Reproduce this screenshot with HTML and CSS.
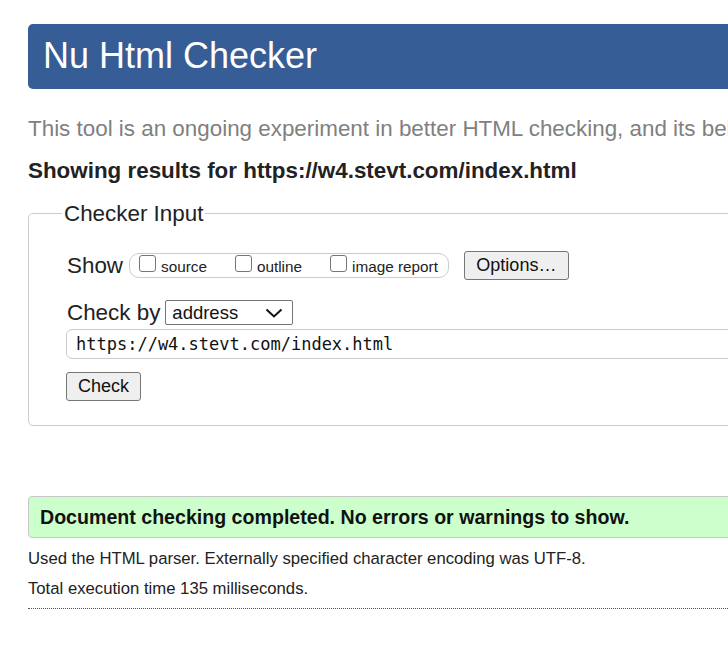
FILE: index.html
```html
<!DOCTYPE html>
<html lang="en">
<head>
<meta charset="utf-8">
<title>Nu Html Checker</title>
<link rel="stylesheet" href="styles.css">
</head>
<body>
<div class="page">
  <h1 class="title">Nu Html Checker</h1>
  <p class="intro">This tool is an ongoing experiment in better HTML checking, and its behavior remains subject to change</p>
  <p class="results">Showing results for https://w4.stevt.com/index.html</p>
  <form class="checker">
    <fieldset class="fs">
      <legend class="legend">Checker Input</legend>
      <div class="row show-row">
        <span class="lbl">Show</span>
        <span class="group">
          <label class="opt"><input class="cb" type="checkbox"><span class="opt-text">source</span></label>
          <label class="opt"><input class="cb" type="checkbox"><span class="opt-text">outline</span></label>
          <label class="opt"><input class="cb" type="checkbox"><span class="opt-text">image report</span></label>
        </span>
        <button type="button" class="btn btn-options">Options…</button>
      </div>
      <div class="row by-row">
        <span class="lbl">Check by</span>
        <span class="sel-wrap">
          <select class="sel"><option>address</option></select>
          <svg class="chev" width="18" height="10" viewBox="0 0 18 10"><path d="M1.5 1.5 L9 8.5 L16.5 1.5" fill="none" stroke="#111" stroke-width="2"/></svg>
        </span>
      </div>
      <input class="url" type="text" value="https://w4.stevt.com/index.html">
      <div class="row check-row">
        <button type="button" class="btn btn-check">Check</button>
      </div>
    </fieldset>
  </form>
  <p class="success">Document checking completed. No errors or warnings to show.</p>
  <p class="meta">Used the HTML parser. Externally specified character encoding was UTF-8.</p>
  <p class="meta meta2">Total execution time 135 milliseconds.</p>
  <hr class="dotted">
</div>
</body>
</html>
```
FILE: styles.css
```css
html {
  overflow: hidden;
}
body {
  margin: 0;
  background: #fff;
  font-family: "Liberation Sans", Arial, sans-serif;
  color: #222;
}
.page {
  width: 1000px;
  padding: 24px 0 0 28px;
}
.title {
  margin: 0;
  height: 65px;
  box-sizing: border-box;
  padding: 0 0 0 15px;
  background: #365d95;
  color: #fff;
  font-size: 36px;
  font-weight: normal;
  line-height: 63px;
  border-radius: 5px;
  white-space: nowrap;
}
.intro {
  margin: 28px 0 0;
  font-size: 22.4px;
  line-height: 23px;
  color: #808080;
  white-space: nowrap;
}
.results {
  margin: 19px 0 0;
  font-size: 22.4px;
  line-height: 23px;
  font-weight: bold;
  color: #222;
}
.checker {
  margin: 20px 0 0;
}
.fs {
  margin: 0;
  border: 1px solid #ccc;
  border-radius: 5px;
  padding: 26px 0 24px 37px;
}
.legend {
  font-size: 22.4px;
  line-height: 23px;
  padding: 0 2px;
  margin-left: -4px;
  color: #222;
}
.row {
  display: flex;
  align-items: center;
}
.lbl {
  font-size: 22.4px;
  line-height: 23px;
  padding-left: 1px;
}
.show-row .lbl {
  margin-right: 6px;
}
.group {
  display: inline-flex;
  align-items: flex-start;
  box-sizing: border-box;
  height: 25px;
  border: 1px solid #ccc;
  border-radius: 10px;
  padding: 0 10px 0 9px;
}
.opt {
  display: inline-flex;
  align-items: flex-start;
  margin-right: 28px;
}
.opt:last-child {
  margin-right: 0;
}
.cb {
  appearance: none;
  -webkit-appearance: none;
  margin: 1px 5px 0 0;
  width: 17px;
  height: 17px;
  box-sizing: border-box;
  border: 1px solid #767676;
  border-radius: 3px;
  background: #fff;
}
.opt-text {
  font-size: 15.3px;
  line-height: 16px;
  margin-top: 5px;
  color: #222;
}
.btn {
  font-family: "Liberation Sans", Arial, sans-serif;
  font-size: 18px;
  line-height: 21px;
  color: #111;
  background: #efefef;
  border: 1px solid #767676;
  border-radius: 3px;
  box-sizing: border-box;
  height: 29px;
  padding: 0 11px;
  margin: 0;
}
.btn-options {
  margin-left: 15px;
  width: 105px;
}
.btn-check {
  width: 75px;
}
.by-row {
  margin-top: 20px;
}
.by-row .lbl {
  margin-right: 5px;
}
.sel-wrap {
  position: relative;
  display: inline-block;
  height: 25px;
}
.sel {
  appearance: none;
  -webkit-appearance: none;
  width: 128px;
  height: 25px;
  box-sizing: border-box;
  border: 1px solid #767676;
  border-radius: 2px;
  background: #fff;
  font-family: "Liberation Sans", Arial, sans-serif;
  font-size: 18.5px;
  color: #111;
  padding: 0 0 0 6px;
  margin: 0;
}
.chev {
  position: absolute;
  right: 10px;
  top: 8px;
  pointer-events: none;
}
.url {
  display: block;
  margin: 4px 0 0;
  width: 1000px;
  height: 30px;
  box-sizing: border-box;
  border: 1px solid #ccc;
  border-radius: 6px;
  padding: 0 0 0 9px;
  font-family: "DejaVu Sans Mono", monospace;
  font-size: 17px;
  color: #111;
  background: #fff;
}
.check-row {
  margin-top: 13px;
}
.success {
  margin: 70px 0 0;
  height: 42px;
  box-sizing: border-box;
  background: #ccffcc;
  border: 1px solid #c8c8c8;
  border-radius: 4px;
  padding: 0 0 0 11px;
  font-size: 19.6px;
  font-weight: bold;
  line-height: 40px;
  color: #111;
  white-space: nowrap;
}
.meta {
  margin: 12px 0 0;
  font-size: 16.7px;
  line-height: 18px;
  color: #222;
}
.meta2 {
  margin-top: 12px;
}
.dotted {
  margin: 10px 0 0;
  border: 0;
  border-top: 1px dotted #555;
  height: 0;
}
```
